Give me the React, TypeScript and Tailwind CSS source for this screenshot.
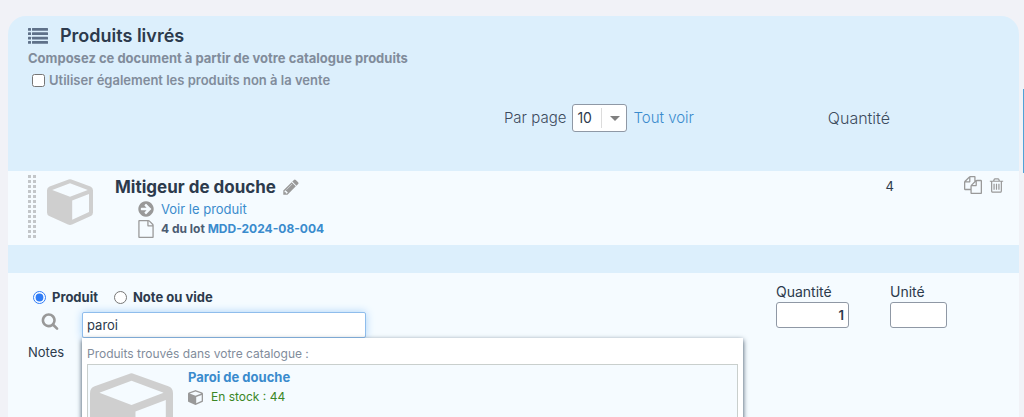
const glyphs = {
  search:
    "M1216 832q0-185-131.5-316.5t-316.5-131.5-316.5 131.5-131.5 316.5 131.5 316.5 316.5 131.5 316.5-131.5 131.5-316.5zm512 832q0 52-38 90t-90 38q-54 0-90-38l-343-342q-179 124-399 124-143 0-273.5-55.5t-225-150-150-225-55.5-273.5 55.5-273.5 150-225 225-150 273.5-55.5 273.5 55.5 225 150 150 225 55.5 273.5q0 220-124 399l343 343q37 37 37 90z",
  trash:
    "M704 736v576q0 14-9 23t-23 9h-64q-14 0-23-9t-9-23v-576q0-14 9-23t23-9h64q14 0 23 9t9 23zm256 0v576q0 14-9 23t-23 9h-64q-14 0-23-9t-9-23v-576q0-14 9-23t23-9h64q14 0 23 9t9 23zm256 0v576q0 14-9 23t-23 9h-64q-14 0-23-9t-9-23v-576q0-14 9-23t23-9h64q14 0 23 9t9 23zm128 724v-948h-896v948q0 22 7 40.5t14.5 27 10.5 8.5h832q3 0 10.5-8.5t14.5-27 7-40.5zm-672-1076h448l-48-117q-7-9-17-11h-317q-10 2-17 11zm928 32v64q0 14-9 23t-23 9h-96v948q0 83-47 143.5t-113 60.5h-832q-66 0-113-58.5t-47-141.5v-952h-96q-14 0-23-9t-9-23v-64q0-14 9-23t23-9h309l70-167q15-37 54-63t79-26h320q40 0 79 26t54 63l70 167h309q14 0 23 9t9 23z",
  copy: "M1696 384q40 0 68 28t28 68v1216q0 40-28 68t-68 28h-960q-40 0-68-28t-28-68v-288h-544q-40 0-68-28t-28-68v-672q0-40 20-88t48-76l408-408q28-28 76-48t88-20h416q40 0 68 28t28 68v328q68-40 128-40h416zm-544 213l-299 299h299v-299zm-640-384l-299 299h299v-299zm196 647l316-316v-416h-384v416q0 40-28 68t-68 28h-416v640h512v-256q0-40 20-88t48-76zm956 804v-1152h-384v416q0 40-28 68t-68 28h-416v640h896z",
  file: "M1596 380q28 28 48 76t20 88v1152q0 40-28 68t-68 28h-1344q-40 0-68-28t-28-68v-1600q0-40 28-68t68-28h896q40 0 88 20t76 48zm-444-244v376h376q-10-29-22-41l-313-313q-12-12-41-22zm384 1528v-1024h-416q-40 0-68-28t-28-68v-416h-768v1536h1280z",
  arrow:
    "M1413 896q0-27-18-45l-91-91-362-362q-18-18-45-18t-45 18l-91 91q-18 18-18 45t18 45l189 189h-502q-26 0-45 19t-19 45v128q0 26 19 45t45 19h502l-189 189q-19 19-19 45t19 45l91 91q18 18 45 18t45-18l362-362 91-91q18-18 18-45zm251 0q0 209-103 385.5t-279.5 279.5-385.5 103-385.5-103-279.5-279.5-103-385.5 103-385.5 279.5-279.5 385.5-103 385.5 103 279.5 279.5 103 385.5z",
  pencil:
    "M491 1536l91-91-235-235-91 91v107h128v128h107zm523-928q0-22-22-22-10 0-17 7l-542 542q-7 7-7 17 0 22 22 22 10 0 17-7l542-542q7-7 7-17zm-54-192l416 416-832 832h-416v-416zm683 96q0 53-37 90l-166 166-416-416 166-165q36-38 90-38 53 0 91 38l235 234q37 39 37 91z",
};

function Glyph({ name, className }: { name: keyof typeof glyphs; className: string }) {
  return (
    <svg viewBox="0 0 1792 1792" fill="currentColor" className={className} aria-hidden="true">
      <path d={glyphs[name]} />
    </svg>
  );
}

function ListIcon() {
  return (
    <svg viewBox="0 0 20 16" fill="#5f7189" className="w-5 h-4" aria-hidden="true">
      {[0, 4.3, 8.7, 13].map((y) => (
        <g key={y}>
          <rect x="0" y={y} width="3" height="2.7" rx="0.5" />
          <rect x="4" y={y} width="16" height="2.7" rx="0.5" />
        </g>
      ))}
    </svg>
  );
}

function CubeIcon({ className }: { className: string }) {
  return (
    <svg viewBox="0 0 46 46" fill="currentColor" className={className} aria-hidden="true">
      <path
        fillRule="evenodd"
        d="M21.6.5q1.4-.6 2.8 0L43.4 7.4Q46 8.4 46 11.2V33.4Q46 35.8 43.8 37L25 45.5Q23 46.4 21 45.5L2.2 37Q0 35.8 0 33.4V11.2Q0 8.4 2.6 7.4ZM23 4.3 5.2 10.9 23 17.8 40.8 10.9ZM25.2 21.4V40.8L42 33V15Z"
      />
    </svg>
  );
}

function DragHandle() {
  return (
    <svg viewBox="0 0 8 63" fill="#c3c6c9" className="w-2 h-[63px]" aria-hidden="true">
      {Array.from({ length: 13 }, (_, i) => (
        <g key={i}>
          <rect x="0" y={i * 5} width="3" height="3" />
          <rect x="5" y={i * 5} width="3" height="3" />
        </g>
      ))}
    </svg>
  );
}

function CatalogHeader() {
  return (
    <div className="bg-[#dceffc] pl-5 pt-2">
      <h2 className="flex items-center gap-3 text-lg leading-6 font-semibold text-[#2c3a4c]">
        <ListIcon />
        Produits livrés
      </h2>
      <p className="text-[13px] leading-5 font-bold text-[#818c9b]">
        Composez ce document à partir de votre catalogue produits
      </p>
      <label className="flex items-center gap-1 pl-1 text-[13px] leading-6 font-semibold text-[#818c9b]">
        <input type="checkbox" className="size-[13px]" />
        Utiliser également les produits non à la vente
      </label>
    </div>
  );
}

function DeliveredTable() {
  return (
    <table className="w-full border-collapse">
      <thead className="bg-[#dceffc] text-base text-[#3c4b5d]">
        <tr className="h-[79px] align-top">
          <th className="pt-3 pr-[76px] text-[15px] font-light">
            <div className="flex items-center justify-end gap-[6px]">
              <label htmlFor="per-page">Par page</label>
              <span className="relative">
                <select
                  id="per-page"
                  className="block w-[55px] h-7 appearance-none rounded-[3px] border border-[#8f98a5] bg-white pl-1 text-sm font-normal text-[#2c3a4c]"
                >
                  <option>10</option>
                  <option>25</option>
                </select>
                <span className="pointer-events-none absolute inset-y-0 right-0 my-1 flex w-[26px] items-center justify-center border-l border-[#dcdcdc]">
                  <svg viewBox="0 0 10 5" fill="#808080" className="w-[10px] h-[5px]">
                    <path d="M0 0h10L5 5z" />
                  </svg>
                </span>
              </span>
              <a href="#all" className="text-[#3a8bcd]">
                Tout voir
              </a>
            </div>
          </th>
          <th className="w-[124px] pt-3 pr-1 text-right leading-7 font-light">Quantité</th>
          <th className="w-[125px]" aria-label="Actions" />
        </tr>
      </thead>
      <tbody className="bg-[#f5fbff]">
        <tr className="h-[74px] align-top">
          <td className="pl-5 pt-1">
            <div className="flex items-start">
              <DragHandle />
              <CubeIcon className="ml-[11px] mt-1 size-[46px] text-[#cfcfcf]" />
              <div className="ml-[22px]">
                <div className="flex items-center gap-[6px] text-[17px] leading-6 font-bold text-[#2c3a4c]">
                  Mitigeur de douche
                  <button aria-label="Modifier">
                    <Glyph name="pencil" className="size-[18px] text-[#999]" />
                  </button>
                </div>
                <div className="flex items-center gap-[6px] pl-[22px] text-[13px] leading-5">
                  <Glyph name="arrow" className="size-[18px] text-[#999]" />
                  <a href="#product" className="text-[#3a8bcd]">
                    Voir le produit
                  </a>
                </div>
                <div className="flex items-center gap-[6px] pl-[22px] text-xs leading-5 font-bold text-[#4b5c72]">
                  <Glyph name="file" className="size-[18px] text-[#999]" />
                  <span>
                    4 du lot{" "}
                    <a href="#lot" className="text-[#3a8bcd]">
                      MDD-2024-08-004
                    </a>
                  </span>
                </div>
              </div>
            </div>
          </td>
          <td className="pt-[5px] text-right text-[13px] leading-5 text-[#2c3a4c]">4</td>
          <td className="pt-[5px] pr-[14px]">
            <div className="flex items-center justify-end gap-[6px] text-[#999]">
              <button aria-label="Dupliquer">
                <Glyph name="copy" className="size-[18px]" />
              </button>
              <button aria-label="Supprimer">
                <Glyph name="trash" className="size-[17px]" />
              </button>
            </div>
          </td>
        </tr>
      </tbody>
    </table>
  );
}

function Suggestions() {
  return (
    <div className="absolute left-0 top-full z-10 w-[661px] bg-white px-[5px] pt-[6px] pb-2 shadow-[0_2px_5px_#33475b]">
      <p className="text-xs leading-5 text-[#818c9b]">Produits trouvés dans votre catalogue :</p>
      <div className="flex h-[104px] items-start border border-[#c9cfcd] bg-[#f5fbff] pl-[2px]">
        <CubeIcon className="mt-2 size-[83px] text-[#cfcfcf]" />
        <div className="pl-[15px] pt-[2px]">
          <a href="#paroi" className="block text-[13px] leading-5 font-bold text-[#3a8bcd]">
            Paroi de douche
          </a>
          <div className="flex items-center gap-2 text-xs leading-5 text-[#3b8726]">
            <CubeIcon className="size-[15px] text-[#999]" />
            En stock : 44
          </div>
        </div>
      </div>
    </div>
  );
}

function AddLineForm() {
  return (
    <form className="flex flex-1 items-start bg-[#f5fbff] pl-5 pt-[9px] text-[13px] text-[#2c3a4c]">
      <div className="flex-1">
        <div className="flex items-center gap-4 pl-[5px] leading-[30px] font-bold">
          <label className="flex items-center gap-[6px]">
            <input type="radio" name="kind" defaultChecked className="size-[13px] accent-[#2f7cf6]" />
            Produit
          </label>
          <label className="flex items-center gap-[6px]">
            <input type="radio" name="kind" className="size-[13px]" />
            Note ou vide
          </label>
        </div>
        <div className="flex items-start">
          <label htmlFor="product-search" aria-label="Rechercher" className="w-[54px] pl-[13px]">
            <Glyph name="search" className="size-[18px] text-[#999]" />
          </label>
          <div className="relative">
            <input
              id="product-search"
              type="text"
              defaultValue="paroi"
              autoComplete="off"
              className="block w-[284px] h-[26px] rounded-[2px] border border-[#8fbdec] bg-white px-1 text-[13px] shadow-[0_0_8px_#a9d2f8] outline-none"
            />
            <Suggestions />
          </div>
        </div>
        <div className="pt-1 leading-5">Notes</div>
      </div>
      <div className="flex gap-[41px] pr-[72px] text-sm">
        <label className="block leading-5">
          Quantité
          <input
            type="text"
            defaultValue="1"
            className="block w-[73px] h-[26px] rounded-[3px] border border-[#8f98a5] bg-white px-1 text-right text-[13px] font-semibold outline-none"
          />
        </label>
        <label className="block leading-5">
          Unité
          <input
            type="text"
            className="block w-[57px] h-[26px] rounded-[3px] border border-[#8f98a5] bg-white px-1 text-[13px] outline-none"
          />
        </label>
      </div>
    </form>
  );
}

export default function App() {
  return (
    <div className="relative h-screen overflow-hidden bg-[#f1f2f7] pl-2 pr-[5px] pt-4 font-['Inter','Liberation_Sans',sans-serif]">
      <div className="flex h-full flex-col overflow-hidden rounded-t-[18px]">
        <CatalogHeader />
        <DeliveredTable />
        <div className="h-7 shrink-0 bg-[#dceffc]" />
        <AddLineForm />
      </div>
      {/* Scroll thumb on the window edge */}
      <div className="absolute right-0 top-[89px] h-[84px] w-px bg-[#4fa3d8]" />
    </div>
  );
}
